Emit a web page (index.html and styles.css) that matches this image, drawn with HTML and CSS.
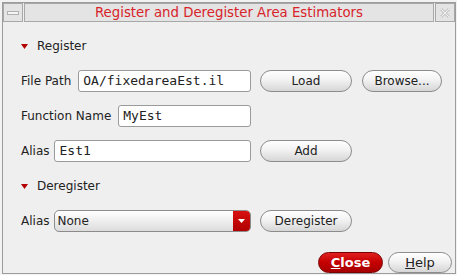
FILE: index.html
```html
<!DOCTYPE html>
<html lang="en">
<head>
    <meta charset="UTF-8">
    <title>Register and Deregister Area Estimators</title>
    <link rel="stylesheet" href="styles.css">
</head>
<body>
    <div class="window">
        <div class="titlebar">
            <div class="tb-btn tb-min"><span class="min-bar"></span></div>
            <div class="tb-title">Register and Deregister Area Estimators</div>
            <div class="tb-btn tb-close">
                <svg width="12" height="12" viewBox="0 0 12 12">
                    <path d="M2 2 L10 10 M10 2 L2 10" stroke="#c8c8c8" stroke-width="3" fill="none"/>
                    <path d="M2 2 L10 10 M10 2 L2 10" stroke="#f4f4f4" stroke-width="1" fill="none"/>
                </svg>
            </div>
        </div>

        <div class="content">
            <div class="section-head">
                <svg class="arrow" width="7" height="5" viewBox="0 0 7 5"><path d="M0 0 H7 L3.5 5 Z" fill="#b40000"/></svg>
                Register
            </div>

            <div class="row first">
                <div class="field">
                    <span class="label">File Path</span>
                    <div class="textbox mono">OA/fixedareaEst.il</div>
                </div>
                <div class="btn load">Load</div>
                <div class="btn browse">Browse...</div>
            </div>

            <div class="row">
                <div class="field">
                    <span class="label">Function Name</span>
                    <div class="textbox mono">MyEst</div>
                </div>
            </div>

            <div class="row">
                <div class="field narrow">
                    <span class="label">Alias</span>
                    <div class="textbox mono">Est1</div>
                </div>
                <div class="btn load">Add</div>
            </div>

            <div class="section-head second">
                <svg class="arrow" width="7" height="5" viewBox="0 0 7 5"><path d="M0 0 H7 L3.5 5 Z" fill="#b40000"/></svg>
                Deregister
            </div>

            <div class="row first">
                <div class="field narrow">
                    <span class="label">Alias</span>
                    <div class="combo">
                        <span class="combo-text">None</span>
                        <span class="combo-arrow">
                            <svg width="7" height="4" viewBox="0 0 7 4"><path d="M0 0 H7 L3.5 4 Z" fill="#fff"/></svg>
                        </span>
                    </div>
                </div>
                <div class="btn load">Deregister</div>
            </div>

            <div class="footer">
                <div class="btn close"><u>C</u>lose</div>
                <div class="btn help"><u>H</u>elp</div>
            </div>
        </div>
    </div>
</body>
</html>
```

FILE: styles.css
```css
body {
    margin: 0;
    background-color: #f2f2f2;
    font-family: "DejaVu Sans", Verdana, sans-serif;
    font-size: 12px;
    color: #222;
}
.window {
    margin: 2px 1px 0 2px;
    height: 270px;
    border: 1px solid #9c9c9c;
    background-color: #efefef;
}
.titlebar {
    display: flex;
    gap: 1px;
    height: 19px;
}
.tb-btn {
    width: 18px;
    border: 1px solid #a8a8a8;
    background-color: #e4e4e4;
    display: flex;
    align-items: center;
    justify-content: center;
}
.min-bar {
    width: 10px;
    height: 2px;
    background-color: #f6f6f6;
    border: 1px solid #b0b0b0;
}
.tb-title {
    flex: 1;
    border: 1px solid #a8a8a8;
    background-color: #e4e4e4;
    color: #d8232a;
    font-size: 13.3px;
    text-align: center;
    line-height: 17px;
}
.content {
    padding: 0 0 0 18px;
}
.section-head {
    display: flex;
    align-items: center;
    height: 20px;
    margin-top: 14px;
}
.section-head.second {
    margin-top: 14px;
}
.arrow {
    margin: 0 9px 0 0;
}
.row {
    display: flex;
    align-items: center;
    height: 22px;
    margin-top: 13px;
}
.row.first {
    margin-top: 14px;
}
.field {
    width: 230px;
    display: flex;
    align-items: center;
    gap: 7px;
}
.field.narrow {
    gap: 5px;
}
.label {
    white-space: nowrap;
}
.textbox {
    flex: 1;
    height: 20px;
    line-height: 20px;
    padding: 0 4px;
    background-color: #fff;
    border: 1px solid #9a9a9a;
    border-radius: 3px;
}
.mono {
    font-family: "DejaVu Sans Mono", monospace;
    font-size: 13px;
}
.btn {
    box-sizing: border-box;
    height: 22px;
    line-height: 20px;
    text-align: center;
    border: 1px solid #8c8c8c;
    border-radius: 11px;
    background: linear-gradient(#ffffff, #f2f2f2 45%, #d6d6d6);
    color: #222;
}
.btn.load {
    width: 92px;
    margin-left: 9px;
}
.btn.browse {
    width: 80px;
    margin-left: 10px;
}
.combo {
    flex: 1;
    display: flex;
    height: 22px;
    box-sizing: border-box;
    border: 1px solid #8c8c8c;
    border-radius: 5px;
    background: linear-gradient(#ffffff, #f0f0f0 45%, #dcdcdc);
    overflow: hidden;
}
.combo-text {
    flex: 1;
    line-height: 20px;
    padding-left: 2px;
}
.combo-arrow {
    width: 17px;
    background: linear-gradient(#d81010, #b00000);
    display: flex;
    align-items: center;
    justify-content: center;
}
.footer {
    display: flex;
    justify-content: flex-end;
    gap: 5px;
    margin-top: 20px;
    padding-right: 3px;
}
.btn.close {
    width: 65px;
    height: 21px;
    line-height: 19px;
    border-color: #7a0000;
    background: linear-gradient(#e02020, #c40000 50%, #a60000);
    color: #fff;
    font-weight: bold;
    font-size: 13px;
}
.btn.help {
    width: 64px;
    height: 21px;
    line-height: 19px;
    font-size: 13px;
}
```
